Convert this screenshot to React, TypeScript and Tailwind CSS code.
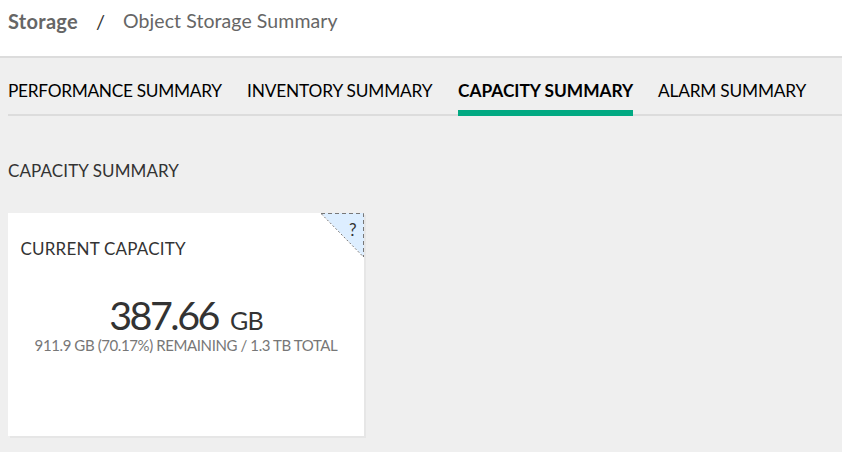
import React from "react";

const tabs = [
  { label: "Performance Summary", width: "w-[214px]", spacing: "tracking-[-0.3px]" },
  { label: "Inventory Summary", width: "w-[186px]", spacing: "tracking-[-0.17px]" },
  { label: "Capacity Summary", width: "w-[175px]", spacing: "tracking-[0px]", active: true },
  { label: "Alarm Summary", width: "w-[148px]", spacing: "tracking-[-0.2px]" },
];

function Breadcrumb() {
  return (
    <header className="flex h-[58px] items-start border-b-2 border-[#dcdcdc] bg-white pl-2 pt-[9px] text-[20px] leading-6 text-[#666]">
      <span className="w-[70px] text-[20px] font-bold tracking-[0.3px]">Storage</span>
      <span className="w-[45px] pl-[18px] text-[#333]">/</span>
      <span className="text-[19.5px] tracking-[0.08px]">Object Storage Summary</span>
    </header>
  );
}

function Tabs() {
  return (
    <nav className="ml-2 flex h-[58px] gap-[25px] border-b-2 border-[#dcdcdc] text-[17.3px] leading-6 whitespace-nowrap uppercase text-black">
      {tabs.map((tab) => (
        <div
          key={tab.label}
          className={`${tab.width} ${tab.spacing} h-[58px] shrink-0 pt-[21px] ${
            tab.active ? "border-b-[6px] border-[#01a982] font-bold" : ""
          }`}
        >
          {tab.label}
        </div>
      ))}
    </nav>
  );
}

function HelpCorner() {
  return (
    <svg className="absolute right-0 top-0" width="44" height="45" viewBox="0 0 44 45">
      <path d="M1 0H44V44Z" fill="#ddeeff" />
      <path d="M1 .5H43.5V44" fill="none" stroke="#777" strokeDasharray="4 3" />
      <path d="M1.5 1L43.5 44" fill="none" stroke="#777" strokeDasharray="2 2" />
      <text x="29" y="23" fontSize="17" fill="#333">
        ?
      </text>
    </svg>
  );
}

function CapacityCard() {
  return (
    <section className="relative mt-[30px] h-[223px] w-[356px] bg-white shadow-[2px_2px_0_#e6e6e6]">
      <HelpCorner />
      <h3 className="pl-[12.5px] pt-6 text-[17px] leading-6 tracking-[0.2px] uppercase">Current Capacity</h3>
      <div className="mt-[31px] flex h-[43px] items-baseline justify-center gap-[12px] whitespace-nowrap">
        <span className="text-[39.5px] leading-[46px] tracking-[-2.5px]">387.66</span>
        <span className="text-[25px] tracking-[-0.8px]">GB</span>
      </div>
      <p className="text-center text-[15px] leading-5 tracking-[-0.4px] text-[#777]">
        911.9 GB (70.17%) REMAINING / 1.3 TB TOTAL
      </p>
    </section>
  );
}

export default function App() {
  return (
    <div className="h-[452px] w-[842px] overflow-hidden bg-[#efefef] font-['Lato',sans-serif] text-[#333]">
      <Breadcrumb />
      <Tabs />
      <main className="pl-2 pt-[43px]">
        <h2 className="text-[17px] leading-6 tracking-[0.1px] uppercase">Capacity Summary</h2>
        <CapacityCard />
      </main>
    </div>
  );
}
